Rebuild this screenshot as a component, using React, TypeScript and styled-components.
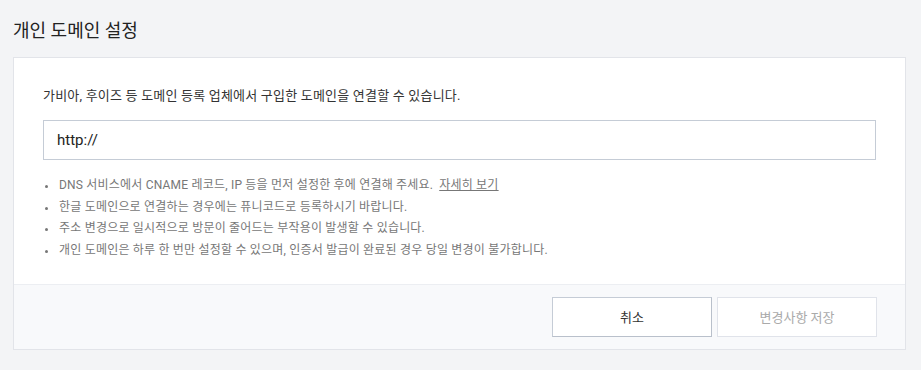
import styled, { createGlobalStyle } from 'styled-components';

const FONT = `Roboto, "Noto Sans CJK KR", "Noto Sans", sans-serif`;

const GlobalStyle = createGlobalStyle`
  body {
    margin: 0;
    background: #f3f4f6;
    font-family: ${FONT};
  }
`;

const NOTES = [
  'DNS 서비스에서 CNAME 레코드, IP 등을 먼저 설정한 후에 연결해 주세요.',
  '한글 도메인으로 연결하는 경우에는 퓨니코드로 등록하시기 바랍니다.',
  '주소 변경으로 일시적으로 방문이 줄어드는 부작용이 발생할 수 있습니다.',
  '개인 도메인은 하루 한 번만 설정할 수 있으며, 인증서 발급이 완료된 경우 당일 변경이 불가합니다.',
];

function App() {
  return (
    <Page>
      <GlobalStyle />
      <Title>개인 도메인 설정</Title>
      <Card>
        <Body>
          <Description>가비아, 후이즈 등 도메인 등록 업체에서 구입한 도메인을 연결할 수 있습니다.</Description>
          <UrlInput defaultValue="http://" />
          <Notes>
            {NOTES.map((note, i) => (
              <Note key={i}>
                {note}
                {i === 0 && <MoreLink href="#">자세히 보기</MoreLink>}
              </Note>
            ))}
          </Notes>
        </Body>
        <Footer>
          <Button>취소</Button>
          <Button disabled>변경사항 저장</Button>
        </Footer>
      </Card>
    </Page>
  );
}

export default App;

const Page = styled.div`
  padding: 0 15px 0 13px;
`

const Title = styled.h1`
  margin: 0;
  padding: 18px 0 13px;
  font-size: 18px;
  line-height: 26px;
  font-weight: 400;
  color: #222;
`

const Card = styled.div`
  background: #fff;
  border: 1px solid #e2e4e9;
`

const Body = styled.div`
  padding: 29px 29px 22px;
`

const Description = styled.p`
  margin: 0 0 15px;
  font-size: 13px;
  line-height: 18px;
  letter-spacing: 0.2px;
  color: #333;
`

const UrlInput = styled.input`
  box-sizing: border-box;
  display: block;
  width: 100%;
  height: 40px;
  padding: 0 13px;
  border: 1px solid #c5ccd6;
  border-radius: 0;
  outline: none;
  font-family: ${FONT};
  font-size: 15px;
  color: #222;
`

const Notes = styled.ul`
  list-style: none;
  margin: 15px 0 0;
  padding: 0;
`

const Note = styled.li`
  position: relative;
  padding-left: 16px;
  font-size: 12px;
  line-height: 21.7px;
  letter-spacing: 0.2px;
  color: #777;

  &::before {
    content: '';
    position: absolute;
    left: 2px;
    top: 10px;
    width: 3px;
    height: 3px;
    border-radius: 50%;
    background: #777;
  }
`

const MoreLink = styled.a`
  margin-left: 6px;
  color: #777;
  text-decoration: underline;
`

const Footer = styled.div`
  display: flex;
  justify-content: flex-end;
  gap: 5px;
  padding: 12px 28px;
  background: #f8f9fb;
  border-top: 1px solid #eceef2;
`

const Button = styled.button`
  box-sizing: border-box;
  width: 160px;
  height: 40px;
  background: #fff;
  border: 1px solid #c5ccd6;
  border-right-color: #b9c0cb;
  border-bottom-color: #b9c0cb;
  font-family: ${FONT};
  font-size: 13px;
  color: #333;
  cursor: pointer;

  &:disabled {
    border-color: #e0e3ea;
    color: #aaa;
    cursor: default;
  }
`
